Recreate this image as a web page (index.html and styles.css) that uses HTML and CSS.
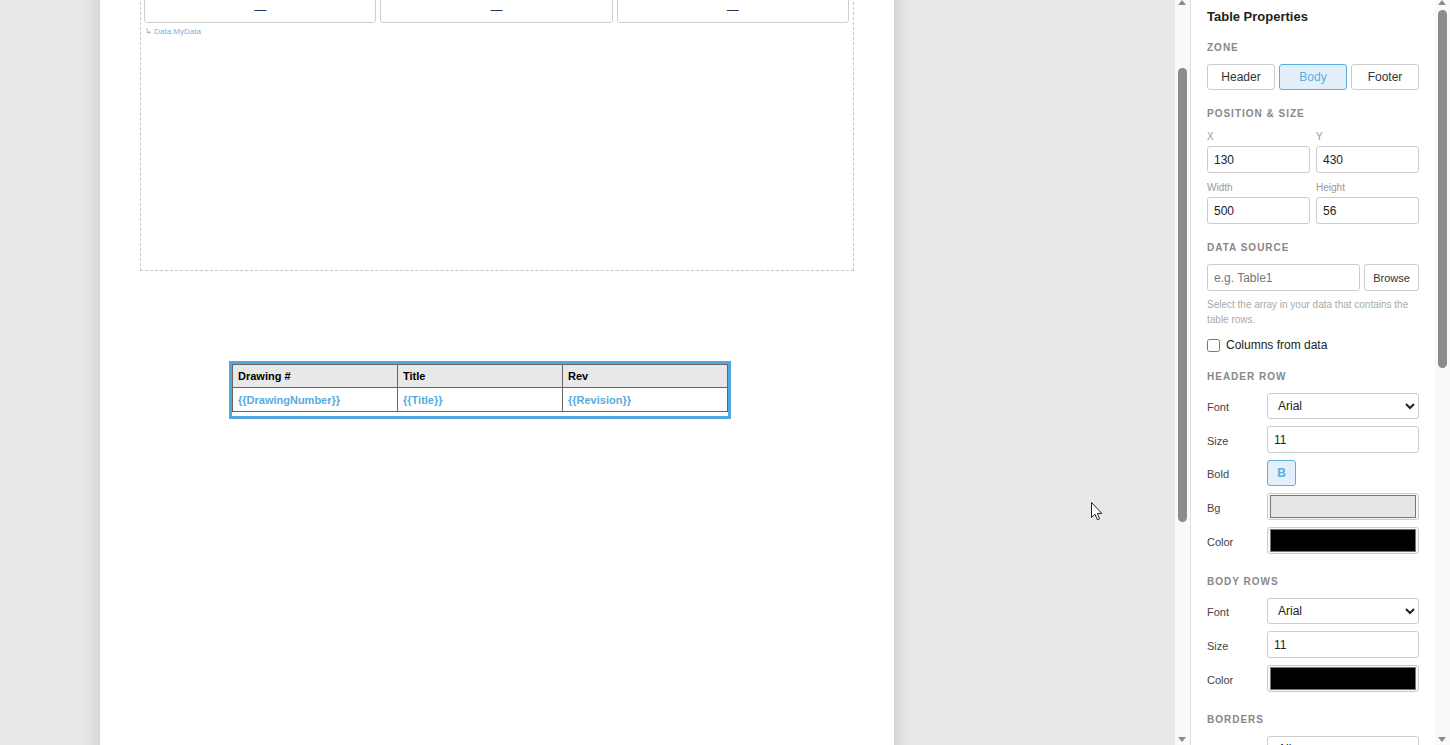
FILE: index.html
```html
<!DOCTYPE html>
<html>
<head>
	<title>Report Designer</title>
	<link rel="stylesheet" href="styles.css">
</head>
<body>

	<div class="app">
		<div class="pane pane-canvas">
			<div class="canvas" id="canvas">
				<div class="sheet">

					<div class="el band" style="left:40px;top:60px;width:714px;height:279px">
						<div class="band-cols">
							<div class="band-cell">—</div>
							<div class="band-cell">—</div>
							<div class="band-cell">—</div>
						</div>
						<div class="band-source">↳ Data.MyData</div>
					</div>

					<div class="el el-table selected" style="left:130px;top:430px;width:500px;height:56px">
						<table class="grid">
							<tr>
								<th>Drawing #</th>
								<th>Title</th>
								<th>Rev</th>
							</tr>
							<tr>
								<td>{{DrawingNumber}}</td>
								<td>{{Title}}</td>
								<td>{{Revision}}</td>
							</tr>
						</table>
					</div>

				</div>
			</div>
			<div class="vscroll">
				<div class="vs-up"></div>
				<div class="vs-track"><div class="vs-thumb" style="top:58px;height:454px"></div></div>
				<div class="vs-down"></div>
			</div>
		</div>

		<div class="pane pane-props">
			<aside class="props">
				<h2>Table Properties</h2>

				<div class="group">
					<div class="group-title">Zone</div>
					<div class="seg">
						<button>Header</button>
						<button class="on">Body</button>
						<button>Footer</button>
					</div>
				</div>

				<div class="group">
					<div class="group-title">Position &amp; Size</div>
					<div class="pair">
						<div class="field"><label>X</label><input class="text" value="130"></div>
						<div class="field"><label>Y</label><input class="text" value="430"></div>
					</div>
					<div class="pair">
						<div class="field"><label>Width</label><input class="text" value="500"></div>
						<div class="field"><label>Height</label><input class="text" value="56"></div>
					</div>
				</div>

				<div class="group">
					<div class="group-title">Data Source</div>
					<div class="source">
						<input class="text" placeholder="e.g. Table1">
						<button class="browse">Browse</button>
					</div>
					<p class="hint">Select the array in your data that contains the table rows.</p>
					<label class="check"><input type="checkbox"> Columns from data</label>
				</div>

				<div class="group">
					<div class="group-title">Header Row</div>
					<div class="rows">
						<div class="row"><span>Font</span>
							<select class="sel"><option>Arial</option><option>Times New Roman</option><option>Courier New</option></select>
						</div>
						<div class="row"><span>Size</span><input class="text" value="11"></div>
						<div class="row"><span>Bold</span><button class="toggle on">B</button></div>
						<div class="row"><span>Bg</span><input class="pick" type="color" value="#e6e6e6"></div>
						<div class="row"><span>Color</span><input class="pick" type="color" value="#000000"></div>
					</div>
				</div>

				<div class="group">
					<div class="group-title">Body Rows</div>
					<div class="rows">
						<div class="row"><span>Font</span>
							<select class="sel"><option>Arial</option><option>Times New Roman</option><option>Courier New</option></select>
						</div>
						<div class="row"><span>Size</span><input class="text" value="11"></div>
						<div class="row"><span>Color</span><input class="pick" type="color" value="#000000"></div>
					</div>
				</div>

				<div class="group">
					<div class="group-title">Borders</div>
					<div class="rows">
						<div class="row"><span>Style</span>
							<select class="sel"><option>All</option><option>Outer</option><option>None</option></select>
						</div>
						<div class="row"><span>Width</span><input class="text" value="1"></div>
						<div class="row"><span>Color</span><input class="pick" type="color" value="#666666"></div>
					</div>
				</div>
			</aside>
			<div class="vscroll">
				<div class="vs-up"></div>
				<div class="vs-track"><div class="vs-thumb" style="top:0;height:358px"></div></div>
				<div class="vs-down"></div>
			</div>
		</div>
	</div>

	<svg class="pointer" width="13" height="21" viewBox="0 0 13 21">
		<path d="M1.5 1.5 L1.5 16.5 L5 13.2 L7.4 18.8 L9.6 17.9 L7.3 12.4 L11.8 12.4 Z" fill="#fff" stroke="#222" stroke-width="1" stroke-linejoin="round"/>
	</svg>

	<script>
document.getElementById('canvas').scrollTop = 93;
	</script>
</body>
</html>
```

FILE: styles.css
```css
body {
	margin: 0;
	font-family: "Liberation Sans", Arial, sans-serif;
	color: #222;
	overflow: hidden;
}

.app {
	display: flex;
	height: 100vh;
}

.pane {
	display: flex;
	flex: none;
	height: 100vh;
	box-sizing: border-box;
}

.pane-canvas {
	width: 1190px;
}

.pane-props {
	width: 260px;
	border-left: 1px solid #dcdcdc;
	background: #fff;
}

/* scrollbars */

.vscroll {
	width: 15px;
	flex: none;
	display: flex;
	flex-direction: column;
	background: #f9f9f9;
}

.vs-up,
.vs-down {
	height: 10px;
	position: relative;
}

.vs-up::after,
.vs-down::after {
	content: "";
	position: absolute;
	left: 3px;
	border: solid transparent;
}

.vs-up::after {
	top: 0;
	border-width: 0 4px 5px;
	border-bottom-color: #8b8b8b;
}

.vs-down::after {
	top: 2px;
	border-width: 5px 4px 0;
	border-top-color: #8b8b8b;
}

.vs-track {
	flex: 1;
	position: relative;
}

.vs-thumb {
	position: absolute;
	left: 3px;
	right: 3px;
	background: #8b8b8b;
	border-radius: 5px;
}

/* design surface */

.canvas {
	flex: 1;
	overflow: hidden;
	background: #e8e8e8;
	padding: 25px 100px;
}

.sheet {
	position: relative;
	width: 794px;
	height: 1123px;
	background: #fff;
	box-shadow: 0 0 18px rgba(0, 0, 0, 0.16);
}

.el {
	position: absolute;
	box-sizing: border-box;
}

.band {
	border: 1px dashed #c6c6c6;
	padding: 3px 4px 0 3px;
}

.band-cols {
	display: flex;
	gap: 4px;
}

.band-cell {
	flex: 1;
	height: 27px;
	box-sizing: border-box;
	border: 1px solid #cfcfcf;
	border-radius: 3px;
	display: flex;
	align-items: center;
	justify-content: center;
	font-size: 12px;
	color: #1f3a60;
}

.band-source {
	margin-top: 4px;
	padding-left: 1px;
	font-size: 8px;
	line-height: 10px;
	color: #78b2e0;
}

.el-table {
	background: #fff;
	padding: 2px;
}

.selected {
	outline: 3px solid #4fa7de;
	outline-offset: -2px;
}

.grid {
	width: 100%;
	border-collapse: collapse;
	table-layout: fixed;
	font-size: 11px;
	font-weight: bold;
}

.grid th,
.grid td {
	border: 1px solid #666;
	padding: 0 5px;
	text-align: left;
	white-space: nowrap;
}

.grid th {
	height: 22px;
	background: #e8e8e8;
	color: #000;
}

.grid td {
	height: 23px;
	color: #58abdf;
}

/* properties panel */

.props {
	flex: 1;
	overflow: hidden;
	padding: 10px 16px 0;
}

.props h2 {
	margin: 0;
	font-size: 13px;
	line-height: 14px;
	color: #222;
}

.group {
	margin-top: 18px;
}

.group-title {
	font-size: 10px;
	font-weight: bold;
	letter-spacing: 1px;
	text-transform: uppercase;
	line-height: 12px;
	color: #888;
	margin-bottom: 10px;
}

.seg {
	display: flex;
	gap: 4px;
}

.seg button,
.browse,
.toggle {
	height: 26px;
	border: 1px solid #ccc;
	border-radius: 3px;
	background: #fff;
	font-family: inherit;
	font-size: 12px;
	color: #333;
	padding: 0;
}

.seg button {
	flex: 1;
}

.seg .on,
.toggle.on {
	background: #e3f0fb;
	border-color: #5aaee0;
	color: #5aaee0;
}

.pair {
	display: grid;
	grid-template-columns: 1fr 1fr;
	column-gap: 6px;
}

.pair + .pair {
	margin-top: 8px;
}

.field label {
	display: block;
	font-size: 10px;
	line-height: 14px;
	color: #999;
	margin-bottom: 2px;
}

.text {
	box-sizing: border-box;
	width: 100%;
	height: 27px;
	border: 1px solid #ccc;
	border-radius: 3px;
	padding: 0 6px;
	font-family: inherit;
	font-size: 12px;
	color: #222;
	outline: none;
}

.text::placeholder {
	color: #777;
}

.source {
	display: flex;
	gap: 4px;
}

.source .text {
	flex: 1;
	width: auto;
	min-width: 0;
}

.browse {
	width: 55px;
	height: 27px;
	font-size: 11px;
}

.hint {
	margin: 6px 0 0;
	font-size: 10px;
	line-height: 15px;
	color: #aaa;
}

.check {
	display: flex;
	align-items: center;
	margin-top: 10px;
	font-size: 12px;
	line-height: 16px;
	color: #222;
}

.check input {
	width: 13px;
	height: 13px;
	margin: 0 6px 0 0;
}

.rows {
	padding-bottom: 4px;
}

.row {
	display: flex;
	align-items: center;
}

.row + .row {
	margin-top: 7px;
}

.row > span {
	width: 60px;
	flex: none;
	font-size: 11px;
	color: #444;
	padding-top: 2px;
}

.row .text,
.row .sel,
.row .pick {
	flex: 1;
	width: auto;
	min-width: 0;
}

.sel {
	height: 26px;
	border: 1px solid #ccc;
	border-radius: 3px;
	background: #fff;
	font-family: inherit;
	font-size: 12px;
	color: #222;
	padding: 0 6px;
}

.toggle {
	width: 29px;
	font-weight: bold;
}

.pick {
	height: 27px;
	box-sizing: border-box;
	border: 1px solid #ccc;
	border-radius: 3px;
	background: #f7f7f7;
	padding: 0;
}

.pick::-webkit-color-swatch-wrapper {
	padding: 1px 2px;
}

.pick::-webkit-color-swatch {
	border: 1px solid #777;
	border-radius: 0;
}

.pointer {
	position: fixed;
	left: 1090px;
	top: 501px;
}
```
